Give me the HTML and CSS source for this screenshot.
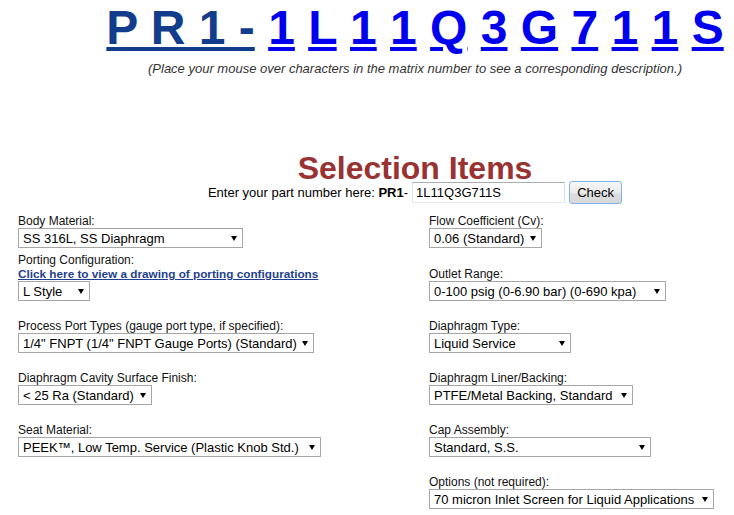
FILE: index.html
```html
<html>
	<head>
		<meta charset="UTF-8">
		<title>Matrix Number Selection</title>
		<link rel="stylesheet" href="styles.css">
	</head>
	<body>
		<div class="page">
			<div class="top">
				<div class="matrix">
					<a href="#" class="prefix">P R 1 -</a>
					<a href="#">1</a>
					<a href="#">L</a>
					<a href="#">1</a>
					<a href="#">1</a>
					<a href="#">Q</a>
					<a href="#">3</a>
					<a href="#">G</a>
					<a href="#">7</a>
					<a href="#">1</a>
					<a href="#">1</a>
					<a href="#">S</a>
				</div>
				<p class="hint">(Place your mouse over characters in the matrix number to see a corresponding description.)</p>
				<div id="desc"></div>
				<h1>Selection Items</h1>
				<form class="check">
					<span>Enter your part number here: <b>PR1</b>-</span>
					<input type="text" class="part" value="1L11Q3G711S">
					<input type="submit" class="go" value="Check">
				</form>
			</div>
			<div class="items">
				<div class="field first">
					<label>Body Material:</label>
					<span class="pick"><select class="s-body"><option>SS 316L, SS Diaphragm</option></select></span>
				</div>
				<div class="field first">
					<label>Flow Coefficient (Cv):</label>
					<span class="pick"><select class="s-flow"><option>0.06 (Standard)</option></select></span>
				</div>
				<div class="field">
					<label>Porting Configuration:</label>
					<a href="#" class="drawing">Click here to view a drawing of porting configurations</a>
					<span class="pick"><select class="s-style"><option>L Style</option></select></span>
				</div>
				<div class="field bottom">
					<label>Outlet Range:</label>
					<span class="pick"><select class="s-outlet"><option>0-100 psig (0-6.90 bar) (0-690 kpa)</option></select></span>
				</div>
				<div class="field">
					<label>Process Port Types (gauge port type, if specified):</label>
					<span class="pick"><select class="s-port"><option>1/4" FNPT (1/4" FNPT Gauge Ports) (Standard)</option></select></span>
				</div>
				<div class="field">
					<label>Diaphragm Type:</label>
					<span class="pick"><select class="s-type"><option>Liquid Service</option></select></span>
				</div>
				<div class="field">
					<label>Diaphragm Cavity Surface Finish:</label>
					<span class="pick"><select class="s-finish"><option>&lt; 25 Ra (Standard)</option></select></span>
				</div>
				<div class="field">
					<label>Diaphragm Liner/Backing:</label>
					<span class="pick"><select class="s-liner"><option>PTFE/Metal Backing, Standard</option></select></span>
				</div>
				<div class="field">
					<label>Seat Material:</label>
					<span class="pick"><select class="s-seat"><option>PEEK™, Low Temp. Service (Plastic Knob Std.)</option></select></span>
				</div>
				<div class="field">
					<label>Cap Assembly:</label>
					<span class="pick"><select class="s-cap"><option>Standard, S.S.</option></select></span>
				</div>
				<div class="field"></div>
				<div class="field">
					<label>Options (not required):</label>
					<span class="pick"><select class="s-options"><option>70 micron Inlet Screen for Liquid Applications</option></select></span>
				</div>
			</div>
		</div>
	</body>
</html>
```

FILE: styles.css
```css
body {
	margin: 0;
	background: #fff;
	font-family: "Liberation Sans", Arial, sans-serif;
	color: #000;
}
.page {
	margin: 0 8px;
}
.top {
	padding-left: 96px;
}
.matrix {
	font-size: 48px;
	font-weight: bold;
	line-height: 55px;
	text-align: center;
	white-space: nowrap;
}
.matrix a {
	color: #0000ee;
}
.matrix a.prefix {
	color: #123c8c;
}
.hint {
	margin: 6px 0 0 0;
	font-size: 13px;
	font-style: italic;
	line-height: 16px;
	text-align: center;
	color: #333;
	white-space: nowrap;
}
#desc {
	height: 79px;
}
h1 {
	margin: 0;
	font-size: 32px;
	line-height: 25px;
	text-align: center;
	color: #993333;
}
.check {
	display: flex;
	justify-content: center;
	align-items: center;
	height: 23px;
	margin: 0;
	font-size: 13px;
}
.check .part {
	width: 153px;
	height: 21px;
	box-sizing: border-box;
	margin: 0 4px 0 4px;
	padding: 0 3px;
	border: 1px solid;
	border-color: #abadb3 #dbdfe6 #e3e9ef #e2e3ea;
	font-family: "Liberation Sans", Arial, sans-serif;
	font-size: 13px;
	outline: none;
}
.check .go {
	width: 53px;
	height: 23px;
	margin: 0;
	padding: 0;
	border: 1px solid #7eb4ea;
	border-radius: 3px;
	background: linear-gradient(#f6f6f6, #ebebeb 50%, #dfdfdf 51%, #d8d8d8);
	font-family: "Liberation Sans", Arial, sans-serif;
	font-size: 13px;
	color: #000;
}
.items {
	display: grid;
	grid-template-columns: 411px 1fr;
	padding-left: 10px;
	margin-top: 10px;
}
.field {
	margin-bottom: 18px;
}
.field.first {
	margin-bottom: 5px;
}
.field.bottom {
	align-self: end;
}
.field label {
	display: block;
	font-size: 12px;
	line-height: 14px;
	color: #111;
}
.drawing {
	display: block;
	font-size: 11.75px;
	font-weight: bold;
	line-height: 14px;
	color: #1f3f8f;
}
.pick {
	display: inline-block;
	position: relative;
	vertical-align: top;
}
.pick::after {
	content: "";
	position: absolute;
	right: 6px;
	top: 8px;
	border-left: 3px solid transparent;
	border-right: 3px solid transparent;
	border-top: 5px solid #000;
}
.pick select {
	display: block;
	height: 20px;
	box-sizing: border-box;
	margin: 0;
	padding: 0 0 0 4px;
	border: 1px solid #a6a6a6;
	border-radius: 0;
	background: #fff;
	-webkit-appearance: none;
	appearance: none;
	font-family: "Liberation Sans", Arial, sans-serif;
	font-size: 13px;
	color: #000;
}
.s-body { width: 225px; }
.s-style { width: 72px; }
.s-port { width: 296px; }
.s-finish { width: 134px; }
.s-seat { width: 303px; }
.s-flow { width: 113px; }
.s-outlet { width: 237px; }
.s-type { width: 142px; }
.s-liner { width: 204px; }
.s-cap { width: 222px; }
.s-options { width: 285px; }
```
